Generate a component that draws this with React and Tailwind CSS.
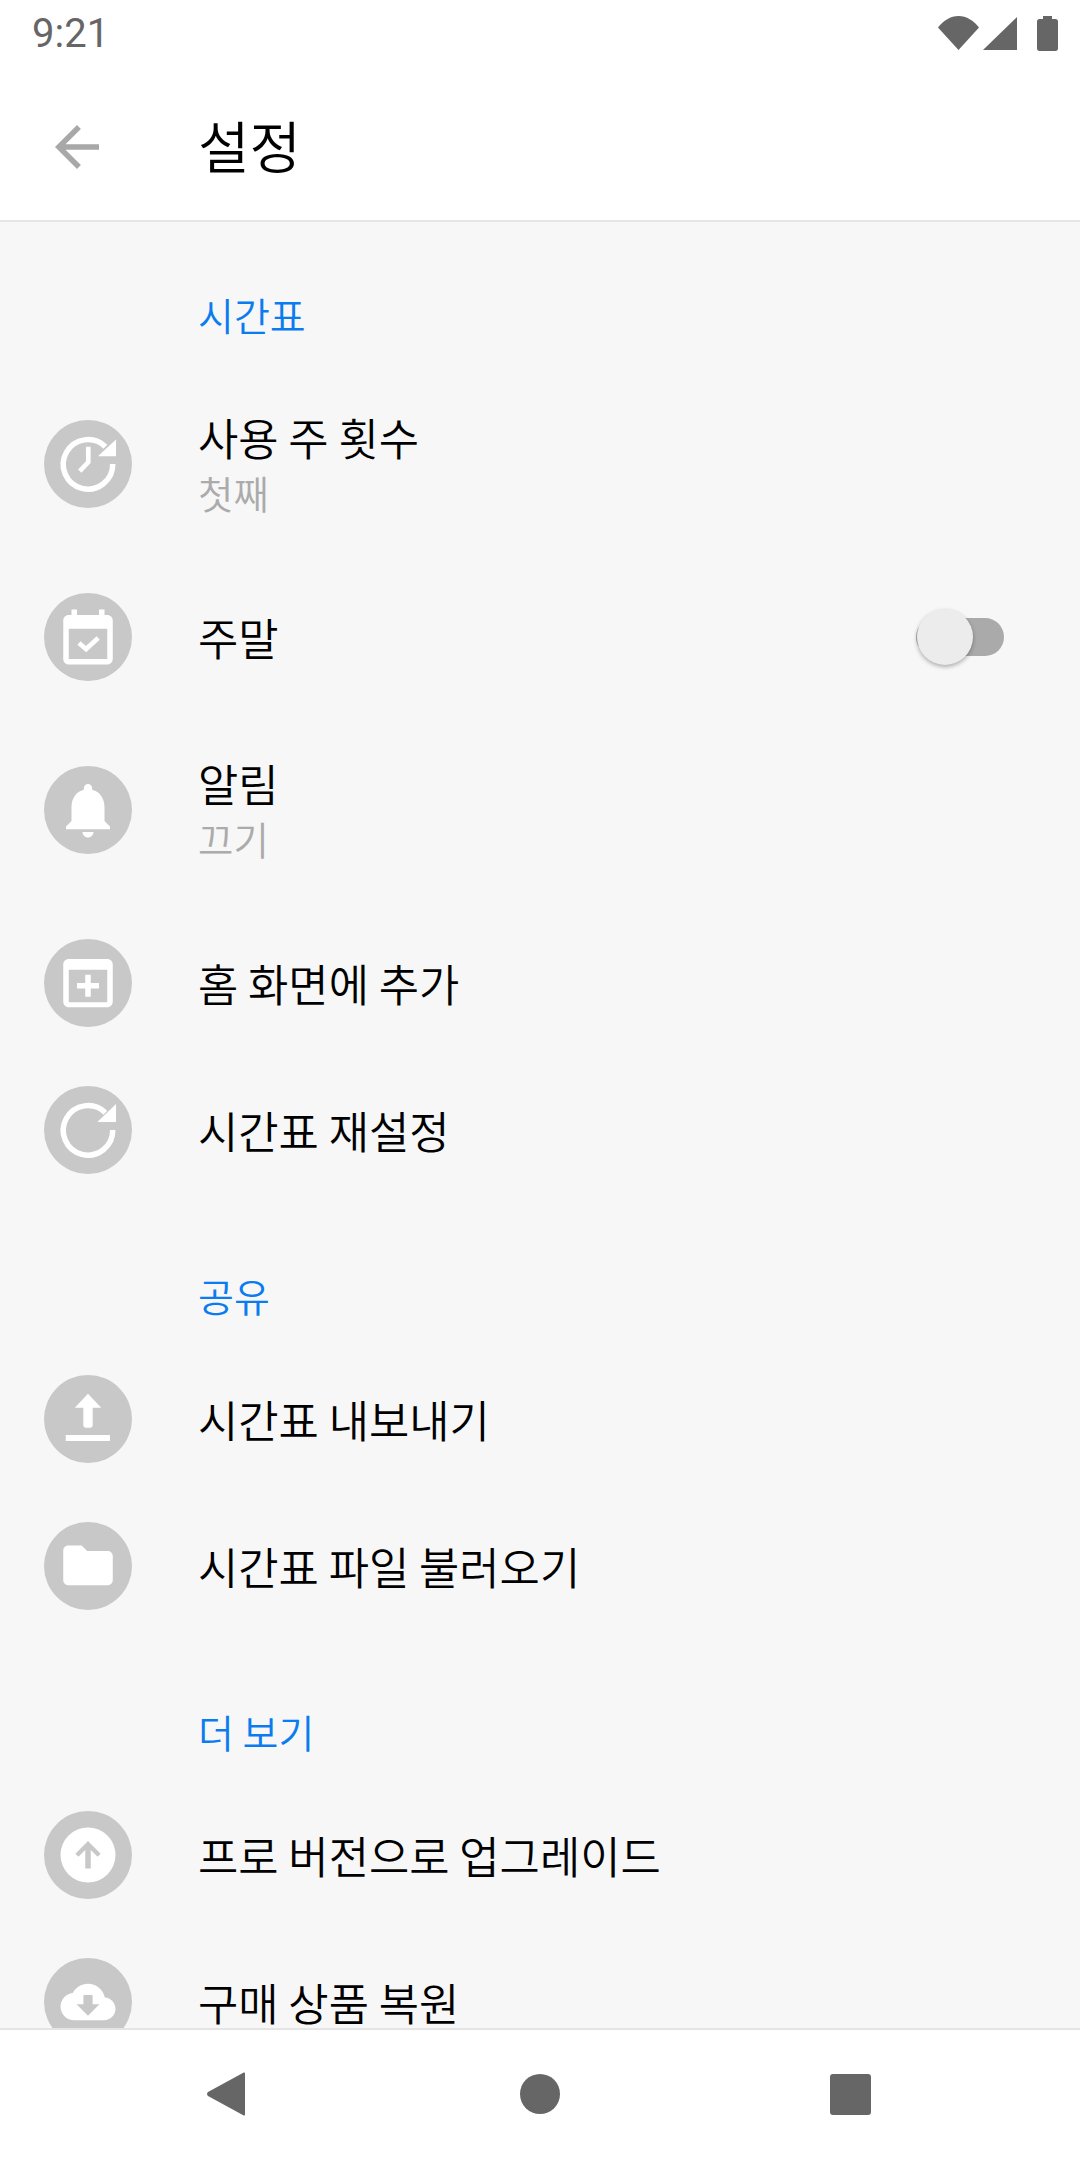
import React from 'react';

const Icon = ({ children, className = 'w-[66px] h-[66px]' }) => (
  <svg viewBox="0 0 24 24" fill="#ffffff" className={className}>{children}</svg>
);

const icons = {
  week: (
    <Icon>
      <path d="M18.300 5.700A9 9 0 1 0 21 12" fill="none" stroke="#ffffff" strokeWidth="2" />
      <path d="M22.200 3.100v6.100H15.600z" />
      <path d="M12.100 5.700v5.600L9 14.600" fill="none" stroke="#ffffff" strokeWidth="1.700" />
    </Icon>
  ),
  weekend: (
    <Icon>
      <path fillRule="evenodd" d="M19 4h-1V2h-2v2H8V2H6v2H5c-1.110 0-1.990.9-1.990 2L3 20c0 1.100.89 2 2 2h14c1.100 0 2-.9 2-2V6c0-1.100-.9-2-2-2zm0 16H5V9h14v11z" />
      <path d="M8.700 14.200l2.600 2.200 4.400-4" fill="none" stroke="#ffffff" strokeWidth="1.700" />
    </Icon>
  ),
  bell: (
    <Icon>
      <path d="M12 22c1.100 0 2-.9 2-2h-4c0 1.100.89 2 2 2zm6-6v-5c0-3.070-1.640-5.640-4.500-6.320V4c0-.83-.67-1.500-1.500-1.500s-1.500.67-1.500 1.500v.68C7.630 5.360 6 7.920 6 11v5l-2 2v1h16v-1l-2-2z" />
    </Icon>
  ),
  add: (
    <Icon>
      <path fillRule="evenodd" d="M19 3.300H5c-1.110 0-2 .9-2 2v13.500c0 1.100.89 2 2 2h14c1.100 0 2-.9 2-2V5.300c0-1.100-.9-2-2-2zM19 19H5V7.200h14z" />
      <path d="M11 17h2v-3h3v-2h-3V9h-2v3H8v2h3z" />
    </Icon>
  ),
  reset: (
    <Icon>
      <path d="M18.300 5.700A9 9 0 1 0 21 12" fill="none" stroke="#ffffff" strokeWidth="2" />
      <path d="M22.200 2.500v6.600H15.400z" />
    </Icon>
  ),
  upload: (
    <Icon>
      <path d="M12 2.800l4.800 5.100h-3.100v6.400c0 .5-.4.9-.9.9h-1.600c-.5 0-.9-.4-.9-.9V7.900H7.200z" />
      <path d="M3.900 17.800H20V20H3.900z" />
    </Icon>
  ),
  folder: (
    <Icon>
      <path d="M9.700 4.500H4.800C3.800 4.500 3 5.300 3 6.300v10.900c0 1 .8 1.800 1.800 1.800h14.400c1 0 1.800-.8 1.800-1.800V8.300c0-1-.8-1.800-1.800-1.800h-7.500z" />
    </Icon>
  ),
  pro: (
    <Icon>
      <circle cx="12" cy="12" r="10" />
      <path d="M12 6.900l4.600 4.600-1.100 1.100-2.500-2.400v6.700h-2v-6.700l-2.500 2.400-1.100-1.100z" fill="#c8c8c8" />
    </Icon>
  ),
  restore: (
    <Icon>
      <path transform="translate(2 2) scale(.8333)" d="M19.350 10.040C18.670 6.590 15.640 4 12 4 9.110 4 6.600 5.640 5.350 8.040 2.340 8.360 0 10.910 0 14c0 3.310 2.690 6 6 6h13c2.760 0 5-2.240 5-5 0-2.640-2.050-4.780-4.650-4.960zM17 13l-5 5-5-5h3V9h4v4h3z" />
    </Icon>
  ),
};

const Header = ({ children }) => (
  <div className="h-[142px] pl-[198px] pt-[67px] text-[39px] leading-[50px] text-[#0a7cf0]">{children}</div>
);

const Row = ({ icon, title, sub, right }) => (
  <div className={`flex items-center shrink-0 pl-[44px] ${sub ? 'h-[199px]' : 'h-[147px]'}`}>
    <div className="w-[88px] h-[88px] rounded-full bg-[#c8c8c8] flex items-center justify-center shrink-0">
      {icons[icon]}
    </div>
    <div className={`ml-[66px] flex-1 ${sub ? 'pb-[2px]' : ''}`}>
      <p className="text-[43.8px] leading-[56px] text-black">{title}</p>
      {sub && <p className="text-[38.5px] leading-[50px] text-[#ababab] mt-[2px]">{sub}</p>}
    </div>
    {right}
  </div>
);

const Toggle = () => (
  <div className="relative w-[88px] h-[38px] mr-[76px] rounded-full bg-[#aaaaaa]">
    <div className="absolute left-[1px] -top-[9px] w-[56px] h-[56px] rounded-full bg-[#ececec] shadow-[0_2px_4px_rgba(0,0,0,0.3)]" />
  </div>
);

export default function App() {
  return (
    <div className="w-[1080px] h-[2160px] flex flex-col overflow-hidden bg-[#f7f7f7] font-['Noto_Sans_CJK_KR',sans-serif] font-[350]">
      {/* status bar */}
      <div className="h-[66px] shrink-0 bg-white flex items-center pl-[32px] pr-[22px]">
        <span className="text-[40px] text-[#666666] font-['Roboto',sans-serif] font-normal leading-none mt-[2px]">9:21</span>
        <div className="ml-auto flex items-center">
          <svg viewBox="0 0 41 34" className="w-[41px] h-[34px]" fill="#666666">
            <path d="M0 11.500C5.500 4.500 12.500 0 20.500 0S35.500 4.500 41 11.500L20.500 34z" />
          </svg>
          <svg viewBox="0 0 34 33" className="w-[34px] h-[33px] ml-[4px]" fill="#666666">
            <path d="M34 0v33H0z" />
          </svg>
          <svg viewBox="0 0 21 35" className="w-[21px] h-[35px] ml-[20px]" fill="#666666">
            <path d="M6 0h9v3h3.500C20 3 21 4 21 5.500v27c0 1.500-1 2.500-2.500 2.500h-16C1 35 0 34 0 32.500v-27C0 4 1 3 2.500 3H6z" />
          </svg>
        </div>
      </div>

      {/* toolbar */}
      <div className="h-[156px] shrink-0 bg-white border-b-2 border-[#e5e5e5] flex items-center pl-[44px] pt-[8px]">
        <Icon className="w-[66px] h-[66px]">
          <path fill="#a8a8a8" d="M20 11H7.830l5.590-5.590L12 4l-8 8 8 8 1.410-1.410L7.830 13H20v-2z" />
        </Icon>
        <h1 className="ml-[88px] -mt-[6px] text-[56px] leading-[70px] text-black font-[350]">설정</h1>
      </div>

      {/* settings list */}
      <div className="flex-1 overflow-hidden">
        <Header>시간표</Header>
        <Row icon="week" title="사용 주 횟수" sub="첫째" />
        <Row icon="weekend" title="주말" right={<Toggle />} />
        <Row icon="bell" title="알림" sub="끄기" />
        <Row icon="add" title="홈 화면에 추가" />
        <Row icon="reset" title="시간표 재설정" />
        <Header>공유</Header>
        <Row icon="upload" title="시간표 내보내기" />
        <Row icon="folder" title="시간표 파일 불러오기" />
        <Header>더 보기</Header>
        <Row icon="pro" title="프로 버전으로 업그레이드" />
        <Row icon="restore" title="구매 상품 복원" />
      </div>

      {/* nav bar */}
      <div className="h-[132px] shrink-0 bg-white border-t-2 border-[#e5e5e5] flex items-center pl-[207px] pb-[2px]">
        <svg viewBox="0 0 38 44" className="w-[38px] h-[44px]" fill="#666666">
          <path d="M37 0.500c.6 0 1 .5 1 1v41c0 .6-.4 1-1 1-.3 0-.5-.1-.7-.2L1 24c-1.300-1-1.300-3 0-4L36.300 .8c.2-.2.4-.3.7-.3z" />
        </svg>
        <div className="ml-[275px] w-[40px] h-[40px] rounded-full bg-[#666666]" />
        <div className="ml-[270px] w-[41px] h-[41px] rounded-[3px] bg-[#666666]" />
      </div>
    </div>
  );
}
